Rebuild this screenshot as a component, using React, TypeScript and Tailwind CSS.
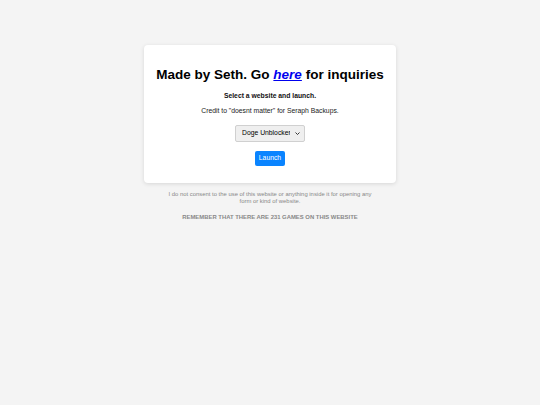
export default function App() {
  return (
    <div
      className="min-h-[405px] w-full bg-[#f4f4f4] flex flex-col items-center pt-[45px]"
      style={{ fontFamily: '"Liberation Sans", Arial, sans-serif' }}
    >
      <div className="w-[252px] bg-white rounded-[4px] shadow-[0_1px_4px_rgba(0,0,0,0.12)] flex flex-col items-center pt-[21px] pb-[17px]">
        <h1 className="text-[13.5px] leading-[18px] font-bold text-black whitespace-nowrap">
          Made by Seth. Go{" "}
          <a href="#" className="italic underline text-[#0000ee]">
            here
          </a>{" "}
          for inquiries
        </h1>
        <p className="mt-[7px] text-[6.8px] leading-[9px] font-bold text-[#111]">
          Select a website and launch.
        </p>
        <p className="mt-[6px] text-[6.8px] leading-[9px] text-[#222]">
          Credit to "doesnt matter" for Seraph Backups.
        </p>
        <div className="relative mt-[10px] flex">
          <select className="block appearance-none h-[17px] w-[70px] bg-[#efefef] border border-[#d0d0d0] rounded-[2px] text-[6.8px] text-black pl-[6px] pr-[14px]">
            <option>Doge Unblocker</option>
          </select>
          <svg
            className="pointer-events-none absolute right-[5px] top-[7px]"
            width="5"
            height="3"
            viewBox="0 0 5 3"
          >
            <path d="M0.5 0.5 L2.5 2.5 L4.5 0.5" fill="none" stroke="#222" strokeWidth="0.9" />
          </svg>
        </div>
        <button className="mt-[9px] h-[15px] w-[30px] bg-[#0a84ff] text-white text-[6.8px] rounded-[2px]">
          Launch
        </button>
      </div>
      <p className="mt-[8px] w-[210px] text-center text-[5.9px] leading-[7px] text-[#888]">
        I do not consent to the use of this website or anything inside it for opening any form or kind of website.
      </p>
      <p className="mt-[9px] text-[5.9px] leading-[7px] font-bold text-[#888]">
        REMEMBER THAT THERE ARE 231 GAMES ON THIS WEBSITE
      </p>
    </div>
  );
}
